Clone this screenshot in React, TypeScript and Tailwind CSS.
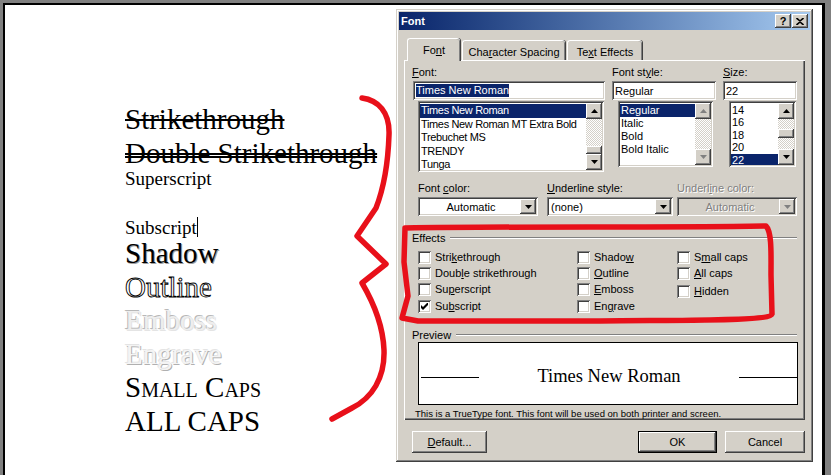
import React from 'react';

const ui = "font-['Liberation_Sans',Arial,sans-serif] text-[11px] leading-[14px] text-black";
const serif = "font-['Liberation_Serif','Times_New_Roman',serif]";
const raised =
  'shadow-[inset_-1px_-1px_#404040,inset_1px_1px_#ffffff,inset_-2px_-2px_#808080,inset_2px_2px_#d4d0c8]';
const sunken =
  'shadow-[inset_1px_1px_#808080,inset_-1px_-1px_#ffffff,inset_2px_2px_#404040,inset_-2px_-2px_#d4d0c8]';
const frame =
  'shadow-[inset_-1px_-1px_#404040,inset_1px_1px_#d4d0c8,inset_-2px_-2px_#808080,inset_2px_2px_#ffffff]';
const dither = 'bg-[repeating-conic-gradient(#d4d0c8_0%_25%,#ffffff_0%_50%)] bg-[length:2px_2px]';

function Tri({ up, disabled }: { up?: boolean; disabled?: boolean }) {
  return (
    <svg width="7" height="4" viewBox="0 0 7 4">
      <path d={up ? 'M3.5 0 L7 4 L0 4Z' : 'M0 0 L7 0 L3.5 4Z'} fill={disabled ? '#808080' : '#000'} />
    </svg>
  );
}

function ArrowBtn({ up, disabled, h = 16 }: { up?: boolean; disabled?: boolean; h?: number }) {
  return (
    <div
      className={`w-[16px] shrink-0 bg-[#d4d0c8] flex items-center justify-center ${raised}`}
      style={{ height: h }}
    >
      <Tri up={up} disabled={disabled} />
    </div>
  );
}

function ScrollBar({ thumbTop, thumbH, disabled }: { thumbTop?: number; thumbH?: number; disabled?: boolean }) {
  return (
    <div className="w-[16px] h-full flex flex-col shrink-0">
      <ArrowBtn up disabled={disabled} />
      <div className={`flex-1 ${dither}`}>
        {!disabled && thumbH ? (
          <div className={`w-[16px] bg-[#d4d0c8] ${raised}`} style={{ marginTop: thumbTop, height: thumbH }} />
        ) : null}
      </div>
      <ArrowBtn disabled={disabled} />
    </div>
  );
}

function ListBox({
  items,
  selected,
  rowH,
  className,
  thumbTop,
  thumbH,
  disabled,
  tight,
}: {
  items: string[];
  selected: number;
  rowH: number;
  className: string;
  thumbTop?: number;
  thumbH?: number;
  disabled?: boolean;
  tight?: boolean;
}) {
  return (
    <div className={`bg-white p-[2px] flex ${sunken} ${className}`}>
      <div className={`flex-1 overflow-hidden pt-[1px] ${tight ? 'tracking-[-0.35px]' : ''}`}>
        {items.map((it, i) => (
          <div
            key={it}
            className={`px-[1px] whitespace-nowrap ${i === selected ? 'bg-[#0a246a] text-white' : ''}`}
            style={{ height: rowH, lineHeight: `${rowH}px` }}
          >
            {it}
          </div>
        ))}
      </div>
      <ScrollBar thumbTop={thumbTop} thumbH={thumbH} disabled={disabled} />
    </div>
  );
}

function Field({ children, className }: { children: React.ReactNode; className: string }) {
  return (
    <div className={`h-[19px] bg-white pl-[3px] flex items-center ${sunken} ${className}`}>{children}</div>
  );
}

function Combo({
  value,
  center,
  disabled,
  className,
}: {
  value: string;
  center?: boolean;
  disabled?: boolean;
  className: string;
}) {
  return (
    <div
      className={`h-[19px] p-[2px] flex items-center ${sunken} ${disabled ? 'bg-[#d4d0c8]' : 'bg-white'} ${className}`}
    >
      <div
        className={`flex-1 pl-[2px] ${center ? 'text-center' : ''} ${
          disabled ? 'text-[#808080] [text-shadow:1px_1px_0_#ffffff]' : ''
        }`}
      >
        {value}
      </div>
      <ArrowBtn disabled={disabled} h={15} />
    </div>
  );
}

function Check({ label, checked, className = '' }: { label: React.ReactNode; checked?: boolean; className?: string }) {
  return (
    <div className={`flex items-center h-[16px] gap-[4px] ${className}`}>
      <span className={`w-[13px] h-[13px] bg-white flex items-center justify-center shrink-0 ${sunken}`}>
        {checked && (
          <svg width="7" height="7" viewBox="0 0 7 7">
            <path d="M0 2 L2 4 L7 -1 L7 2 L2 7 L0 5Z" fill="#000" />
          </svg>
        )}
      </span>
      <span className="whitespace-nowrap">{label}</span>
    </div>
  );
}

function GroupHead({ label }: { label: string }) {
  return (
    <div className="flex items-center ml-[8px] w-[385px] h-[14px]">
      <span>{label}</span>
      <div className="flex-1 ml-[5px] h-[2px] border-t border-t-[#808080] border-b border-b-white" />
    </div>
  );
}

function Btn({ children, className, def }: { children: React.ReactNode; className: string; def?: boolean }) {
  return (
    <div
      className={`h-[22px] bg-[#d4d0c8] flex items-center justify-center ${
        def ? 'border border-black' : ''
      } ${className}`}
    >
      <div className={`w-full h-full flex items-center justify-center ${raised}`}>{children}</div>
    </div>
  );
}

function Dialog() {
  return (
    <div className={`w-[417px] h-[453px] bg-[#d4d0c8] p-[3px] flex flex-col ${frame} ${ui}`}>
      <div className="h-[18px] flex items-center justify-between pl-[2px] pr-[2px] bg-linear-to-r from-[#0a246a] to-[#a6caf0]">
        <span className="text-white font-bold">Font</span>
        <div className="flex gap-[1px]">
          <div className={`w-[16px] h-[14px] bg-[#d4d0c8] flex items-center justify-center font-bold text-[11px] ${raised}`}>
            ?
          </div>
          <div className={`w-[16px] h-[14px] bg-[#d4d0c8] flex items-center justify-center ${raised}`}>
            <svg width="8" height="7" viewBox="0 0 8 7">
              <path d="M0.5 0 L4 3 L7.5 0 M0.5 7 L4 4 L7.5 7" stroke="#000" strokeWidth="1.6" fill="none" />
            </svg>
          </div>
        </div>
      </div>

      <div className="ml-[5px] w-[401px] mt-[8px]">
        <div className="h-[22px] flex items-end pl-[3px]">
          <div className="relative z-10 -mb-[1px] w-[53px] h-[23px] bg-[#d4d0c8] border-l border-t border-white rounded-tl-[3px] rounded-tr-[3px] shadow-[inset_-1px_0_#808080,1px_0_#404040] flex justify-center pt-[4px]">
            Fo<u>n</u>t
          </div>
          <div className="ml-[2px] w-[103px] h-[20px] bg-[#d4d0c8] border-l border-t border-white rounded-tl-[3px] rounded-tr-[3px] shadow-[inset_-1px_0_#808080,1px_0_#404040] flex justify-center pt-[4px]">
            Cha<u>r</u>acter Spacing
          </div>
          <div className="ml-[2px] w-[75px] h-[20px] bg-[#d4d0c8] border-l border-t border-white rounded-tl-[3px] rounded-tr-[3px] shadow-[inset_-1px_0_#808080,1px_0_#404040] flex justify-center pt-[4px]">
            Te<u>x</u>t Effects
          </div>
        </div>

        <div className="h-[360px] shadow-[inset_1px_1px_#ffffff,inset_-1px_-1px_#404040,inset_-2px_-2px_#808080] pt-[5px]">
          <div className="flex">
            <div className="ml-[8px] w-[193px]">
              <div className="h-[14px]">
                <u>F</u>ont:
              </div>
              <Field className="mt-[2px] ml-[1px] w-[192px]">
                <span className="bg-[#0a246a] text-white leading-[13px]">Times New Roman</span>
              </Field>
              <ListBox
                className="mt-[1px] ml-[6px] w-[186px] h-[71px]"
                rowH={13.5}
                selected={0}
                tight
                items={['Times New Roman', 'Times New Roman MT Extra Bold', 'Trebuchet MS', 'TRENDY', 'Tunga']}
                thumbTop={27}
                thumbH={8}
              />
            </div>
            <div className="ml-[7px] w-[104px]">
              <div className="h-[14px]">
                Font st<u>y</u>le:
              </div>
              <Field className="mt-[2px] w-[104px]">Regular</Field>
              <ListBox
                className="mt-[1px] ml-[6px] w-[95px] h-[66px]"
                rowH={13}
                selected={0}
                items={['Regular', 'Italic', 'Bold', 'Bold Italic']}
                disabled
              />
            </div>
            <div className="ml-[7px] w-[74px]">
              <div className="h-[14px]">
                <u>S</u>ize:
              </div>
              <Field className="mt-[2px] w-[74px]">22</Field>
              <ListBox
                className="mt-[1px] ml-[6px] w-[67px] h-[66px]"
                rowH={12.4}
                selected={4}
                items={['14', '16', '18', '20', '22']}
                thumbTop={10}
                thumbH={9}
              />
            </div>
          </div>

          <div className="flex ml-[14px] mt-[9px]">
            <div className="w-[120px]">
              <div className="h-[14px]">
                Font <u>c</u>olor:
              </div>
              <Combo className="mt-[2px] w-[120px]" value="Automatic" center />
            </div>
            <div className="ml-[9px] w-[126px]">
              <div className="h-[14px]">
                <u>U</u>nderline style:
              </div>
              <Combo className="mt-[2px] w-[126px]" value="(none)" />
            </div>
            <div className="ml-[4px] w-[120px]">
              <div className="h-[14px] text-[#808080] [text-shadow:1px_1px_0_#ffffff]">
                Underl<u>i</u>ne color:
              </div>
              <Combo className="mt-[2px] w-[120px]" value="Automatic" center disabled />
            </div>
          </div>

          <div className="mt-[15px]">
            <GroupHead label="Effects" />
          </div>
          <div className="flex ml-[14px] mt-[4px]">
            <div className="w-[159px]">
              <Check label={<>Stri<u>k</u>ethrough</>} />
              <Check label={<>Doub<u>l</u>e strikethrough</>} />
              <Check label={<>Su<u>p</u>erscript</>} />
              <Check label={<>Su<u>b</u>script</>} checked className="mt-[1px]" />
            </div>
            <div className="w-[100px]">
              <Check label={<>Shado<u>w</u></>} />
              <Check label={<><u>O</u>utline</>} />
              <Check label={<><u>E</u>mboss</>} />
              <Check label={<>En<u>g</u>rave</>} className="mt-[1px]" />
            </div>
            <div>
              <Check label={<>S<u>m</u>all caps</>} />
              <Check label={<><u>A</u>ll caps</>} />
              <Check label={<><u>H</u>idden</>} className="mt-[2px]" />
            </div>
          </div>

          <div className="mt-[14px]">
            <GroupHead label="Preview" />
          </div>
          <div className="ml-[14px] w-[380px] h-[63px] border border-black bg-white flex items-center pt-[8px]">
            <div className="ml-[2px] w-[58px] h-px bg-black" />
            <div className={`flex-1 text-center text-[18.5px] leading-[22px] ${serif} -mt-[3px]`}>Times New Roman</div>
            <div className="w-[58px] h-px bg-black" />
          </div>
          <div className="ml-[11px] mt-[2px] text-[9.5px] leading-[14px]">
            This is a TrueType font. This font will be used on both printer and screen.
          </div>
        </div>
      </div>

      <div className="flex mt-[11px] ml-[13px]">
        <Btn className="w-[75px]">
          <span>
            <u>D</u>efault...
          </span>
        </Btn>
        <Btn className="ml-[151px] w-[79px]" def>
          OK
        </Btn>
        <Btn className="ml-[8px] w-[80px]">Cancel</Btn>
      </div>
    </div>
  );
}

function Doc() {
  const line = 'h-[33.5px] whitespace-nowrap';
  return (
    <div className={`w-[391px] shrink-0 pl-[120px] pt-[98px] text-[29px] leading-[33.5px] text-black ${serif}`}>
      <div className={`${line} line-through decoration-[1.5px]`}>Strikethrough</div>
      <div className={`${line} line-through decoration-double decoration-[1.5px]`}>Double Strikethrough</div>
      <div className={line}>
        <span className="relative -top-[11px] text-[19px]">Superscript</span>
      </div>
      <div className={line}>
        <span className="relative top-[4px] text-[19px]">
          Subscript
          <span className="inline-block w-[1.5px] h-[20px] bg-black align-[-3px]" />
        </span>
      </div>
      <div className={`${line} [text-shadow:1px_1px_0_#a0a0a0]`}>Shadow</div>
      <div className={`${line} text-white [-webkit-text-stroke:0.9px_#000000]`}>Outline</div>
      <div className={`${line} text-[#eeeeee] [text-shadow:-1px_-1px_0_#b8b8b8,1px_1px_0_#e4e4e4]`}>Emboss</div>
      <div className={`${line} text-[#f4f4f4] [text-shadow:1px_1px_0_#b0b0b0,-1px_-1px_0_#e4e4e4]`}>Engrave</div>
      <div className={`${line} [font-variant-caps:small-caps]`}>Small Caps</div>
      <div className={line}>ALL CAPS</div>
    </div>
  );
}

function Marks() {
  return (
    <svg className="absolute inset-0 pointer-events-none" width="831" height="475" viewBox="0 0 831 475">
      <g fill="none" stroke="#e8101a" strokeWidth="5.5" strokeLinecap="round" strokeLinejoin="round">
        <path d="M362 98 C378 100 390 112 389 135 C388 165 383 190 376 208 L357 236 L386 264 L362 283 C372 300 383 325 384 350 C385 378 372 398 352 408 L332 419" />
        <path d="M405 228 C520 226 660 228 766 226 C772 232 771 255 771 275 L772 314 C770 321 700 320 600 321 L418 321 L402 318 L408 296 L404 262 L405 228" />
      </g>
    </svg>
  );
}

export default function App() {
  return (
    <div className="relative w-[831px] h-[475px] overflow-hidden bg-[#808080] pl-[3px] pt-[3px]">
      <div className="flex w-[822px] h-[472px] bg-white border-l-2 border-t-2 border-r-[3px] border-black">
        <Doc />
        <div className="mt-[4px]">
          <Dialog />
        </div>
      </div>
      <Marks />
    </div>
  );
}
